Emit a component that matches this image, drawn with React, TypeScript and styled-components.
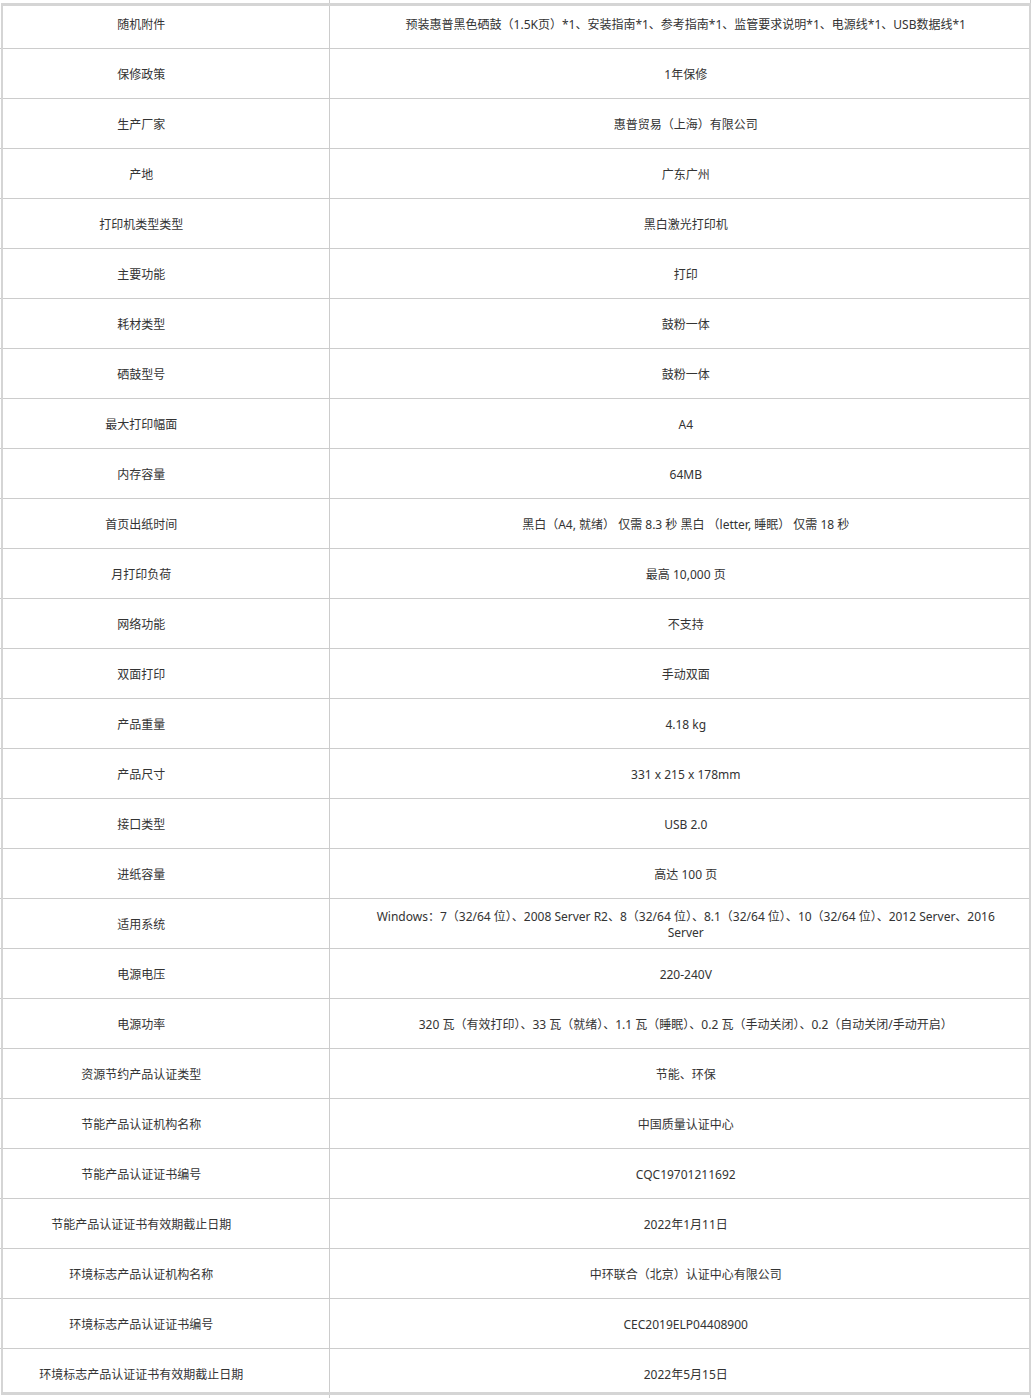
import React from "react";
import styled, { createGlobalStyle } from "styled-components";

const specs: [string, React.ReactNode][] = [
  ["随机附件", "预装惠普黑色硒鼓（1.5K页）*1、安装指南*1、参考指南*1、监管要求说明*1、电源线*1、USB数据线*1"],
  ["保修政策", "1年保修"],
  ["生产厂家", "惠普贸易（上海）有限公司"],
  ["产地", "广东广州"],
  ["打印机类型类型", "黑白激光打印机"],
  ["主要功能", "打印"],
  ["耗材类型", "鼓粉一体"],
  ["硒鼓型号", "鼓粉一体"],
  ["最大打印幅面", "A4"],
  ["内存容量", "64MB"],
  ["首页出纸时间", "黑白（A4, 就绪） 仅需 8.3 秒 黑白 （letter, 睡眠） 仅需 18 秒"],
  ["月打印负荷", "最高 10,000 页"],
  ["网络功能", "不支持"],
  ["双面打印", "手动双面"],
  ["产品重量", "4.18 kg"],
  ["产品尺寸", "331 x 215 x 178mm"],
  ["接口类型", "USB 2.0"],
  ["进纸容量", "高达 100 页"],
  [
    "适用系统",
    <>
      Windows：7（32/64 位）、2008 Server R2、8（32/64 位）、8.1（32/64 位）、10（32/64 位）、2012 Server、2016
      <br />
      Server
    </>,
  ],
  ["电源电压", "220-240V"],
  ["电源功率", "320 瓦（有效打印）、33 瓦（就绪）、1.1 瓦（睡眠）、0.2 瓦（手动关闭）、0.2（自动关闭/手动开启）"],
  ["资源节约产品认证类型", "节能、环保"],
  ["节能产品认证机构名称", "中国质量认证中心"],
  ["节能产品认证证书编号", "CQC19701211692"],
  ["节能产品认证证书有效期截止日期", "2022年1月11日"],
  ["环境标志产品认证机构名称", "中环联合（北京）认证中心有限公司"],
  ["环境标志产品认证证书编号", "CEC2019ELP04408900"],
  ["环境标志产品认证证书有效期截止日期", "2022年5月15日"],
];

export default function App() {
  return (
    <Page>
      <GlobalStyle />
      <SpecTable>
        <tbody>
          {specs.map(([label, value]) => (
            <Row key={label}>
              <LabelCell>{label}</LabelCell>
              <ValueCell>{value}</ValueCell>
            </Row>
          ))}
        </tbody>
      </SpecTable>
      <Frame />
    </Page>
  );
}

const GlobalStyle = createGlobalStyle`
  html, body {
    margin: 0;
    padding: 0;
    background: #fff;
    overflow: hidden;
  }
  body {
    font-family: "Noto Sans", "Noto Sans CJK SC", sans-serif;
  }
`;

const Page = styled.div`
  position: relative;
  width: 1032px;
  height: 1398px;
  overflow: hidden;
`;

const SpecTable = styled.table`
  width: 1031px;
  margin-top: -2px;
  border-collapse: collapse;
  table-layout: fixed;
`;

const Row = styled.tr`
  height: 50px;
`;

const Cell = styled.td`
  height: 49px;
  box-sizing: border-box;
  border-bottom: 1px solid #cccccc;
  border-right: 1px solid #cccccc;
  text-align: center;
  vertical-align: middle;
  font-size: 12px;
  line-height: 16px;
  color: #333;
  padding-top: 4px;
  padding-bottom: 0;
`;

const LabelCell = styled(Cell)`
  width: 329px;
  padding-left: 12px;
  padding-right: 58px;
`;

const ValueCell = styled(Cell)`
  padding-left: 26px;
  padding-right: 14px;
`;

const Frame = styled.div`
  position: absolute;
  top: 3px;
  left: 1px;
  width: 1030px;
  height: 1392px;
  box-sizing: border-box;
  border-style: solid;
  border-color: #d5d5d5;
  border-width: 3px 2px;
  pointer-events: none;
`;
